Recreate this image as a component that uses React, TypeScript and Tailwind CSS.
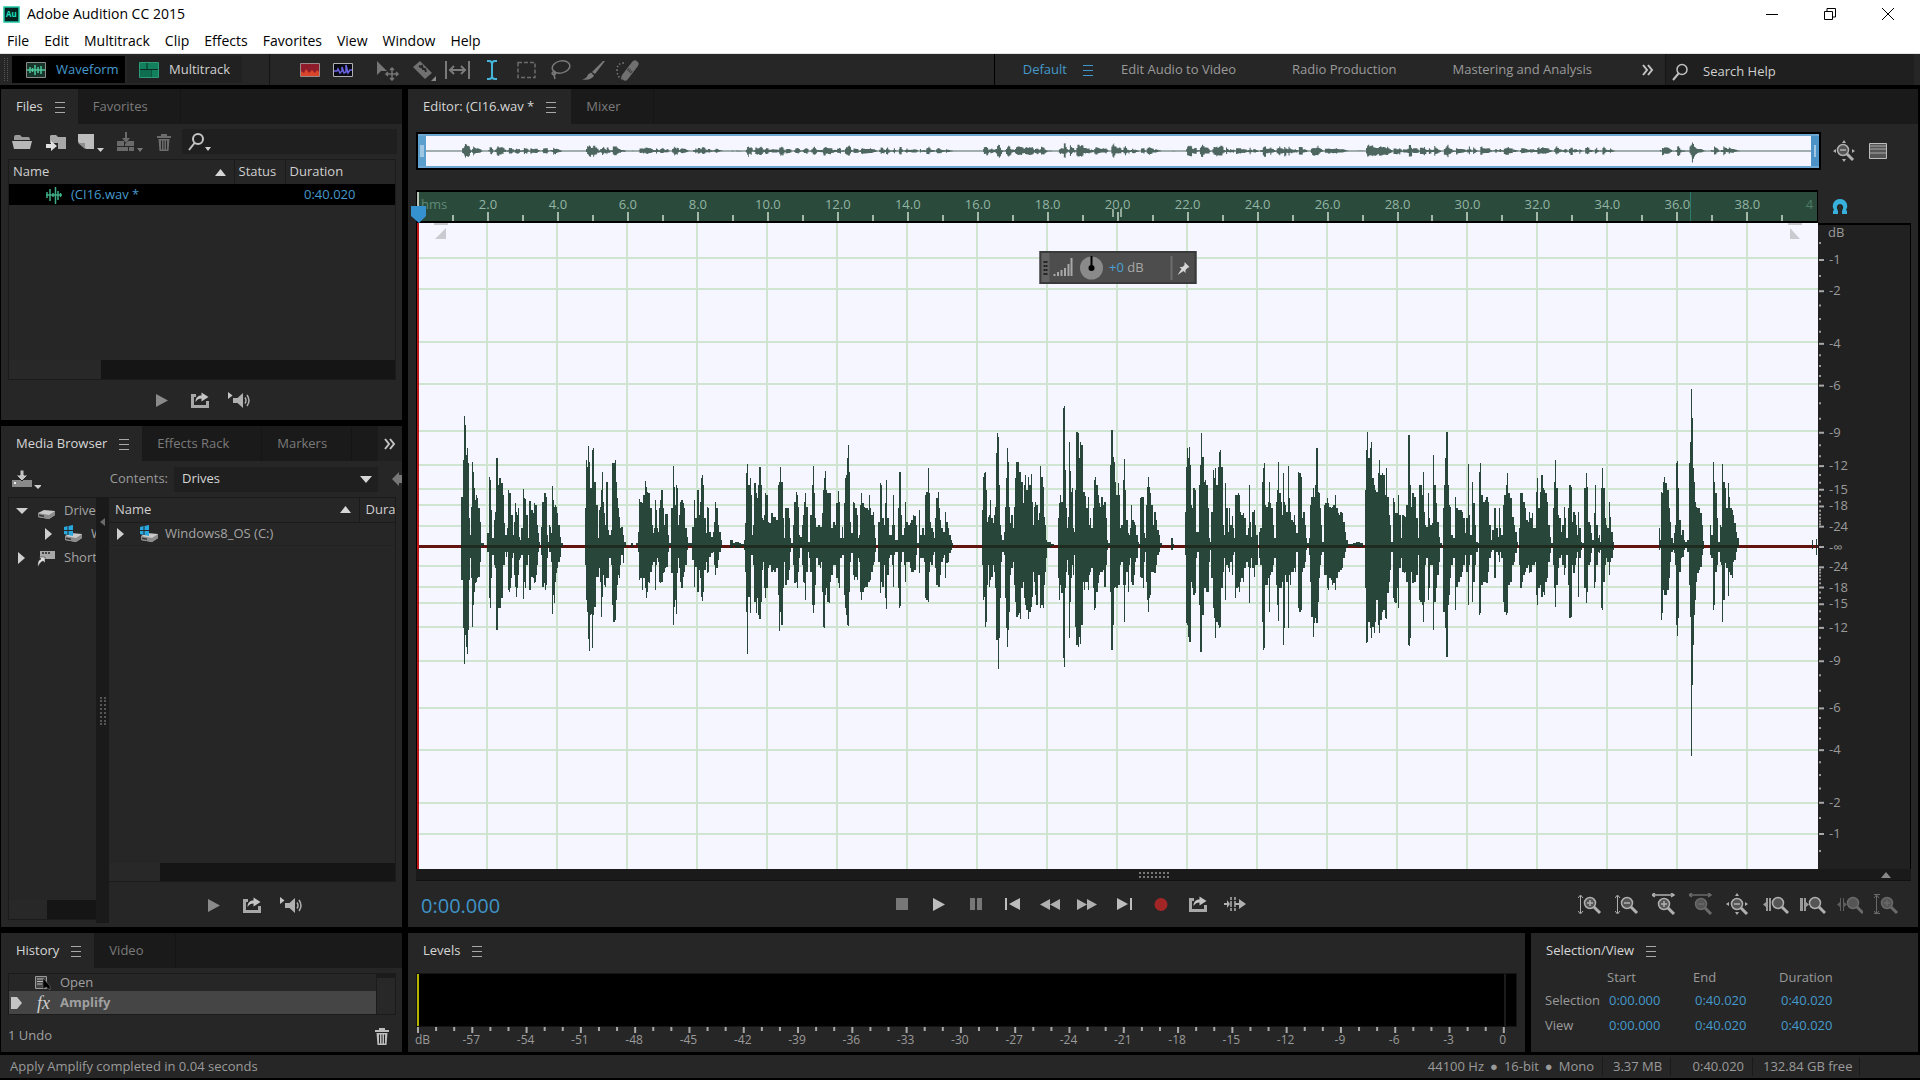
import type { ReactNode } from "react";
import clsx from "clsx";

// Peaks are "x,up,down" steps, each one held until the next x.
const TAKE_A =
  "143,145,105 147,180,165 149,255,250 151,388,358 154,360,270 157,270,305 160,290,328 162,245,255 165,80,105 168,30,40 171,115,100 174,248,247 176,220,180 178,170,140 181,135,115 185,150,110 188,140,100 191,110,95 195,70,50 198,20,20 200,6,4 207,0,0 216,35,20 220,200,25 222,203,160 225,195,188 227,105,100 230,20,30 235,75,60 238,100,70 240,180,200 242,260,255 245,205,278 247,180,188 250,200,188 254,200,130 256,185,160 259,150,60 262,65,30 263,65,60 266,30,20 269,30,35 272,50,20 274,165,135 278,155,140 281,157,130 283,90,100 286,90,40 288,30,25 290,70,90 294,125,125 297,100,155 299,90,130 302,110,90 305,25,45 308,15,40 312,50,30 316,168,163 319,140,110 322,138,130 326,90,60 329,20,30 334,132,135 339,105,95 343,95,100 346,125,115 350,120,110 353,120,90 355,60,60 358,35,20 361,10,5 365,0,0 367,55,30 370,130,125 374,155,115 377,155,135 380,145,120 383,30,40 386,10,5 390,60,20 393,55,20 395,35,50 398,178,208 400,135,150 403,115,175 406,120,110 409,115,85 412,95,70 415,60,50 419,25,35 422,5,5 428,0,0 490,110,60 493,255,165 496,235,200 498,298,282 501,250,318 504,170,210 507,172,208 510,285,310 513,292,210 516,190,185 520,190,165 521,120,95 525,20,97 528,25,50 530,105,70 533,115,110 535,165,215 538,220,155 541,130,90 543,95,120 546,60,125 548,188,178 550,190,100 553,100,90 555,45,100 558,30,40 562,45,60 565,245,180 567,248,210 569,245,230 573,255,225 576,190,165 579,140,120 582,110,90 585,85,100 588,50,60 591,55,30 595,55,35 597,30,55 600,8,6 605,0,0 620,7,7 623,0,0 632,5,0 638,40,20 640,138,105 645,130,100 650,125,135 653,150,100 657,192,130 660,175,158 663,160,140 666,155,110 670,155,115 673,110,80 677,60,60 680,35,50 684,50,50 686,135,135 689,105,60 691,50,40 695,40,50 698,110,110 701,135,115 704,165,110 707,110,85 710,40,50 712,60,80 715,93,70 718,92,65 721,30,20 724,5,3 731,110,85 735,175,150 737,238,240 739,175,185 743,120,165 745,180,208 747,170,85 750,60,40 753,90,70 756,130,110 760,134,128 763,125,95 767,110,80 771,50,60 775,25,15 779,5,3 790,55,45 794,60,50 796,135,125 799,80,65 803,165,140 808,165,110 810,90,75 813,130,100 815,200,155 818,210,168 821,180,140 824,80,75 828,35,50 831,115,85 835,110,80 838,40,35 843,25,25 847,40,20 850,70,60 853,128,90 857,110,70 861,60,45 865,40,20 870,15,10 873,0,0 897,15,10 904,5,4 910,8,8 920,6,8 927,3,2 936,15,15 938,65,80 941,215,200 944,243,328 946,180,155 951,200,205 954,150,30 957,30,30 961,60,60 964,185,170 968,155,205 971,140,160 974,180,210 978,235,222 982,180,170 985,80,75 988,75,50 991,90,130 994,155,160 998,150,130 1001,70,70 1004,65,60 1010,97,80 1016,85,75 1020,83,82 1025,75,70 1029,70,45 1031,180,150 1034,190,258 1037,235,200 1040,190,240 1043,80,130 1046,20,50 1049,80,140 1051,110,120 1056,110,105 1061,80,75 1065,20,20 1068,5,5 1073,60,60 1076,130,115 1080,158,110 1083,150,130 1086,115,80 1089,30,40 1092,25,10 1097,60,60 1100,90,110 1103,130,115 1107,155,165 1110,115,80 1113,10,20 1118,10,40 1121,90,80 1125,180,180 1128,238,205 1131,155,180 1134,80,120 1137,55,40 1141,60,60 1147,55,70 1150,55,50 1153,95,140 1155,165,245 1158,200,248 1161,222,150 1164,165,130 1168,155,170 1172,155,175 1176,155,110 1180,50,90 1185,70,60 1189,60,60 1193,125,100 1198,163,115 1201,130,130 1204,20,40 1209,55,30 1212,20,30 1215,125,150 1218,200,190 1221,210,210 1223,260,240 1226,300,242 1229,220,140 1232,70,50 1235,35,25 1239,130,90 1243,125,105 1247,110,95 1251,90,105 1253,20,40 1257,30,50 1260,120,140 1263,155,165 1266,125,140 1271,115,130 1275,110,125 1281,105,110 1285,150,110 1288,110,105 1292,90,80 1296,100,60 1299,60,50 1303,20,20 1306,0,0 1311,70,50 1315,185,145 1318,180,110 1322,80,125 1326,60,60 1330,125,160 1333,195,192 1336,80,90 1340,30,40 1344,30,30 1349,60,60 1352,150,125 1355,60,30 1359,15,20 1366,110,130 1368,220,190 1371,218,182 1374,90,50 1377,30,20 1383,50,60 1387,130,110 1390,70,50 1395,60,50 1399,65,70 1403,75,80 1407,90,80 1411,88,75 1416,60,30 1420,5,5 1425,105,85 1428,30,40 1434,50,40 1438,30,50 1441,30,40 1443,150,160 1446,160,165 1449,232,172 1452,155,80 1455,70,50 1459,50,60 1463,40,30 1467,20,20 1470,80,70 1473,140,120 1477,158,125 1480,110,125 1483,75,90 1487,50,50 1491,40,40 1495,40,30 1498,100,100 1501,70,55 1505,50,50 1509,30,25 1514,15,15 1518,5,5 1520,0,0";

const TAKE_B =
  "62,105,60 64,205,165 67,215,155 71,220,247 73,165,230 76,70,120 79,85,60 82,90,125 85,135,105 88,80,95 91,65,60 95,90,80 98,115,130 101,275,285 104,335,285 106,325,372 109,180,280 112,60,160 115,30,50 118,15,20 123,40,30 126,115,160 129,200,250 132,292,305 135,250,255 138,115,200 141,65,90 144,90,70 147,50,50 151,115,120 154,200,170 158,250,215 162,248,210 165,220,205 168,220,222 171,190,130 175,125,110 179,180,160 182,210,180 186,165,195 190,205,222 194,180,200 198,213,185 201,130,155 204,60,80 207,115,110 211,130,150 214,120,180 217,75,90 221,95,90 224,238,188 227,205,180 231,175,190 234,85,120 237,60,80 240,15,40 243,8,10 255,3,3 262,0,0 274,80,100 277,125,165 280,150,120 283,130,145 288,410,340 290,418,365 293,225,130 296,110,80 299,50,45 302,85,90 305,308,278 308,222,170 311,160,100 314,170,60 317,50,90 320,40,30 323,165,245 326,340,300 329,335,306 332,260,275 336,310,298 340,300,240 343,160,110 347,160,135 350,148,110 354,110,110 357,145,135 360,60,90 364,80,80 367,50,70 371,30,40 373,110,130 376,195,195 379,203,190 382,180,140 385,150,115 389,125,90 392,115,80 396,145,80 400,120,75 404,130,125 408,80,60 411,15,15 415,5,5 421,240,140 424,345,315 427,405,375 429,265,240 432,250,130 435,190,125 438,150,130 442,185,120 446,150,120 449,50,60 452,60,50 455,195,120 459,258,230 462,165,120 465,75,80 469,35,140 472,30,60 475,50,40 479,120,110 482,75,120 486,70,90 490,60,50 493,30,40 497,10,10 500,3,3 504,140,95 508,145,100 511,145,130 514,35,50 517,20,20 520,120,110 523,175,165 526,205,200 529,175,160 532,155,150 536,120,80 540,60,80 544,100,85 548,75,60 552,45,30 556,30,20 561,5,5 566,0,0 592,20,16 595,0,0 597,4,8 600,0,0 630,100,30 633,235,235 636,290,240 639,260,275 642,293,292 645,240,290 647,120,110 650,110,130 653,170,150 657,165,145 660,40,40 664,40,20 669,180,180 672,240,320 675,335,322 678,265,210 682,190,130 685,195,130 689,180,140 693,110,140 696,20,50 699,10,15 704,100,100 707,225,190 711,200,220 715,230,280 718,180,230 722,235,240 726,280,248 729,285,245 732,235,130 735,60,80 739,30,40 742,185,165 745,110,60 749,40,70 754,110,80 757,60,50 761,88,90 764,50,30 768,20,20 770,150,160 774,150,130 778,155,125 782,150,140 784,100,110 788,90,100 792,95,110 796,80,70 800,30,50 805,50,65 808,180,175 811,70,70 815,25,40 818,100,70 822,105,95 825,60,60 829,30,60 833,0,0 837,40,40 841,50,60 845,190,230 848,232,315 851,245,310 854,120,120 858,115,120 861,130,100 866,188,200 869,125,90 872,110,80 876,60,60 880,20,40 884,130,120 888,165,180 891,250,228 894,155,130 898,130,130 901,90,110 905,215,300 908,130,250 911,120,90 914,100,110 917,238,248 920,140,90 924,100,120 928,75,80 931,70,80 935,90,70 938,60,80 942,35,20 946,220,190 950,215,200 954,205,195 957,80,80 961,100,70 965,60,50 969,20,15 972,5,5 978,20,30 980,120,110 983,145,215 987,170,275 990,145,235 994,180,220 998,290,235 1001,160,170 1004,155,100 1007,110,60 1011,60,30 1014,10,20 1019,120,90 1023,125,90 1027,140,130 1030,125,135 1034,115,100 1038,110,105 1041,115,120 1045,120,115 1050,150,135 1053,110,100 1057,95,80 1061,90,80 1065,100,75 1069,95,70 1073,70,40 1077,40,20 1081,15,10 1085,3,3 1100,6,4 1110,10,6 1120,7,5 1127,0,0 1134,165,130 1137,285,295 1140,340,292 1143,260,230 1147,290,250 1150,280,250 1152,310,280 1154,200,245 1158,180,265 1162,165,230 1166,160,165 1170,215,240 1174,255,265 1177,210,225 1181,215,200 1185,210,195 1189,150,220 1193,230,222 1196,145,145 1200,90,110 1204,60,75 1208,10,20 1211,140,160 1215,130,170 1219,95,175 1223,95,130 1227,150,190 1230,90,70 1234,20,40 1238,90,80 1242,88,85 1246,85,80 1250,120,110 1254,330,300 1257,330,302 1260,180,280 1263,115,80 1266,155,115 1270,145,110 1274,145,110 1278,80,90 1282,20,30 1285,180,165 1289,180,170 1293,150,180 1296,218,230 1299,100,170 1303,60,60 1306,55,40 1310,155,165 1313,80,130 1317,60,60 1321,65,60 1325,270,255 1328,180,170 1332,125,130 1336,70,90 1340,25,50 1344,5,10 1349,0,0 1352,110,200 1356,180,200 1359,260,250 1362,340,335 1365,180,180 1368,120,150 1372,115,100 1376,30,60 1380,20,40 1386,145,195 1390,110,125 1395,105,110 1400,105,95 1405,100,80 1409,80,60 1413,35,30 1417,80,80 1422,242,180 1425,90,60 1429,30,30 1434,188,170 1437,125,110 1441,60,60 1445,10,20 1450,5,10 1454,220,210 1457,245,205 1460,150,120 1465,130,110 1470,135,110 1474,145,115 1478,130,80 1482,60,40 1486,15,20 1490,45,15 1496,110,100 1500,50,20 1505,25,30 1508,110,50 1512,50,20 1516,30,40 1520,120,170 1524,150,200 1528,180,210 1531,215,205 1534,155,120 1539,140,110 1545,0,0";

const TAKE_C =
  "383,85,60 388,60,50 392,40,25 397,10,5 401,0,0 404,50,60 407,155,128 411,155,110 416,130,90 420,110,80 425,75,70 429,70,60 433,100,85 437,80,80 441,95,60 445,50,60 450,50,50 454,160,150 457,200,180 460,110,130 464,160,120 468,210,155 472,170,140 476,165,150 480,155,110 485,130,100 489,60,50 494,25,25 498,5,5 503,110,60 506,190,130 509,255,185 512,170,120 517,90,70 521,80,40 525,40,30 529,60,60 533,115,90 537,80,70 541,20,30 546,110,120 550,180,218 554,175,215 557,70,60 561,100,85 565,90,60 569,60,40 573,30,20 576,100,155 579,50,40 583,10,15 588,5,5 593,170,130 598,215,175 601,175,140 605,70,60 609,60,50 613,35,25 617,15,10 621,95,130 625,180,110 628,60,60 632,20,20 636,30,25 640,10,15 643,170,190 646,230,195 649,170,110 652,80,60 656,60,40 660,50,50 665,130,90 668,85,50 672,40,40 676,10,15 680,0,0 810,50,15 813,15,10 816,160,225 819,155,205 822,190,135 826,205,150 829,185,150 834,165,135 838,110,100 841,70,50 845,20,20 850,5,15 855,35,25 858,60,60 860,245,240 863,253,272 866,170,220 869,75,80 873,30,40 878,45,35 882,15,15 886,10,10 892,15,20 896,245,120 899,310,215 902,355,345 903,468,633 906,380,420 909,230,300 912,190,210 915,130,165 918,115,110 922,110,85 926,110,75 930,95,65 934,60,30 938,12,12 942,0,0 958,60,30 962,30,40 967,250,195 970,190,180 974,155,80 978,80,60 982,10,20 987,60,50 991,55,60 994,243,230 997,190,165 1001,170,55 1005,110,70 1010,185,152 1013,145,80 1017,110,90 1021,105,100 1025,90,50 1029,65,45 1033,40,20 1037,20,10 1042,0,0 1255,15,12 1257,0,0 1266,18,30 1269,0,0";

const toPath = (take: string) => {
  const steps = take.split(" ").map((s) => s.split(",").map(Number));
  let top = `M${steps[0][0]} 0`;
  let bottom = "";
  steps.forEach(([x, up, down], i) => {
    const end = steps[i + 1] ? steps[i + 1][0] : x;
    top += `V${-up}H${end}`;
    bottom = `V${down}H${x}` + bottom;
  });
  return `${top}${bottom}Z`;
};

const TAKES = [
  { d: toPath(TAKE_A), transform: "translate(-7 0) scale(.357143 .333333)" },
  { d: toPath(TAKE_B), transform: "translate(543 0) scale(.357143 .333333)" },
  { d: toPath(TAKE_C), transform: "translate(963 0) scale(.344352 .333333)" },
];

const LENGTH = 40.02;
const DB_LINES = [-1, -2, -4, -6, -9, -12, -15, -18, -24];
const DB_MINOR = [-0.5, -1.5, -2.5, -3, -3.5, -4.5, -5, -5.5, -7, -8, -10, -11, -13, -14, -16, -17, -19, -20, -21, -22, -23];

const timeX = (s: number) => `${(s / LENGTH) * 100}%`;
const dbY = (db: number, side: number) => `${50 - side * 50 * Math.pow(10, db / 20)}%`;

const Hamburger = ({ blue }: { blue?: boolean }) => (
  <svg width="10" height="12" viewBox="0 0 10 12" shapeRendering="crispEdges">
    <path d="M0 1.500h10M0 6.500h10M0 11.500h10" stroke={blue ? "#3f97cb" : "#a8a8a8"} strokeWidth="1" />
  </svg>
);

const Tab = ({ label, active, className }: { label: string; active?: boolean; className?: string }) => (
  <button
    className={clsx(
      "flex h-full items-center gap-3 whitespace-nowrap border-r pl-[15px] text-[13px]",
      active ? "border-transparent bg-[#262626] text-[#d6d6d6]" : "border-[#151515] text-[#7b7b7b]",
      className
    )}
  >
    {label}
    {active && <Hamburger />}
  </button>
);

const TabBar = ({ children, plain }: { children: ReactNode; plain?: boolean }) => (
  <div className={clsx("flex h-[35px] shrink-0", plain ? "bg-[#262626]" : "bg-[#1a1a1a]")}>{children}</div>
);

const Icon = ({ w, h = 22, children }: { w: number; h?: number; children: ReactNode }) => (
  <svg width={w} height={h} viewBox={`0 0 ${w} ${h}`} fill="none" className="shrink-0">
    {children}
  </svg>
);

const IconButton = ({ label, className, children }: { label: string; className?: string; children: ReactNode }) => (
  <button aria-label={label} className={clsx("flex shrink-0 items-center justify-center", className)}>
    {children}
  </button>
);

const LoopIcon = () => (
  <Icon w={20}>
    <path d="M1 5h5v3H4v8h12v-4h3v7H1z" fill="#a8a8a8" />
    <path d="M5.500 13c0-5 3-6.500 6-6.500V3.500l7 4.500-7 4.500V9.500c-2.500 0-4.500 1-6 3.500z" fill="#c4c4c4" />
  </Icon>
);

const PlayIcon = ({ color }: { color: string }) => (
  <Icon w={14}>
    <path d="M1 5v13l12-6.500z" fill={color} />
  </Icon>
);

const SpeakerIcon = () => (
  <Icon w={24}>
    <path d="M1 3l4.500 3.500L1 10z" fill="#c4c4c4" />
    <path d="M6 9h4.500L16 4v15l-5.500-5H6z" fill="#b0b0b0" />
    <path d="M18 8.500q2 3 0 6M20 6q4 5.500 0 11" stroke="#b0b0b0" strokeWidth="1.500" />
  </Icon>
);

const TrashIcon = ({ color }: { color: string }) => (
  <Icon w={16}>
    <path d="M2.500 8h11l-1 12h-9zM1 5h14v2H1zM5 3h6v2H5z" fill={color} />
    <path d="M5.500 9.500v9M8 9.500v9M10.500 9.500v9" stroke="#262626" />
  </Icon>
);

const ClipIcon = () => (
  <Icon w={18}>
    <path d="M1 11h16M2 8v6M5 5v12M8 9v4M10.500 3v17M13 7v9M15.500 9v4" stroke="#3fae86" strokeWidth="1.500" />
  </Icon>
);

const DriveIcon = ({ windows }: { windows?: boolean }) => (
  <Icon w={20}>
    <path d="M2 13l6-3 11 1v4l-6 4-11-2z" fill="#c9c9c9" />
    <path d="M2 13l11 2 6-4v4l-6 4-11-2z" fill="#8b8b8b" />
    <path d="M3 14.500l5 1v1.500l-5-1z" fill="#333" />
    {windows && (
      <>
        <path d="M0 2h10v10H0z" fill="#262626" />
        <path d="M1 4l3.500-1v4H1zM5.500 3L10 2v5H5.500zM1 8h3.500v4L1 11zM5.500 8H10v5l-4.500-1z" fill="#29a8e0" />
      </>
    )}
  </Icon>
);

const Lens = ({ sign, x = 10, y = 12, color = "#b0b0b0" }: { sign?: string; x?: number; y?: number; color?: string }) => (
  <g>
    <circle cx={x} cy={y - 2} r="5.500" fill="#555" stroke={color} strokeWidth="1.500" />
    <path d={`M${x + 4} ${y + 2}l6 6`} stroke={color} strokeWidth="3" />
    {sign && <path d={`M${x - 3} ${y - 2}h6`} stroke={color} strokeWidth="1.500" />}
    {sign === "+" && <path d={`M${x} ${y - 5}v6`} stroke={color} strokeWidth="1.500" />}
  </g>
);

const UpDown = ({ color = "#b0b0b0" }) => (
  <path d="M2.500 3v17M0 5l2.500-3L5 5M0 18l2.500 3L5 18" stroke={color} />
);

const LeftRight = ({ color = "#b0b0b0" }) => (
  <path d="M1 2h20M3 0L0 2l3 2M19 0l3 2-3 2" stroke={color} strokeWidth="1.500" />
);

const Arrows = () => (
  <path d="M11 0l2 3H9zM11 22l2-3H9zM0 11l3-2v4zM22 11l-3-2v4z" fill="#b0b0b0" />
);

const ZOOMS: { label: string; icon: ReactNode }[] = [
  { label: "Zoom In (Amplitude)", icon: <><UpDown /><Lens sign="+" x={12} /></> },
  { label: "Zoom Out (Amplitude)", icon: <><UpDown /><Lens sign="-" x={12} /></> },
  { label: "Zoom In (Time)", icon: <><LeftRight /><Lens sign="+" x={12} y={13} /></> },
  { label: "Zoom Out (Time)", icon: <><LeftRight color="#6a6a6a" /><Lens sign="-" x={12} y={13} color="#6a6a6a" /></> },
  { label: "Zoom Out Full", icon: <><Arrows /><Lens sign="-" x={11} y={13} /></> },
  { label: "Zoom In at In Point", icon: <><path d="M5 5H3v4l-3 2.500L3 14v4h2zM6 5h2v13H6z" fill="#9a9a9a" /><Lens x={15} /></> },
  { label: "Zoom In at Out Point", icon: <><path d="M0 5h3v13H0zM4 5h2v4l3 2.500L6 14v4H4z" fill="#9a9a9a" /><Lens x={15} /></> },
  { label: "Zoom to Selection", icon: <><path d="M4 5v13H3v-4l-3-2.500L3 9V5zM6 5v13h1v-4l3-2.500L7 9V5z" fill="#5e5e5e" /><Lens x={16} color="#6a6a6a" /></> },
  { label: "Zoom Reset", icon: <><path d="M0 1.500h6M0 20.500h6" stroke="#6a6a6a" /><UpDown color="#6a6a6a" /><Lens sign="+" x={13} color="#6a6a6a" /></> },
];

const TRANSPORT: { label: string; icon: ReactNode }[] = [
  { label: "Stop", icon: <path d="M5 5h12v12H5z" fill="#777" /> },
  { label: "Play", icon: <path d="M5 5v13l12-6.500z" fill="#bdbdbd" /> },
  { label: "Pause", icon: <path d="M5 5h5v12H5zM12 5h5v12h-5z" fill="#777" /> },
  { label: "Previous", icon: <path d="M3 5h2v12H3zM18 5v12L7 11z" fill="#bdbdbd" /> },
  { label: "Rewind", icon: <path d="M11 6v11L1 11.500zM21 6v11l-10-5.500z" fill="#b0b0b0" /> },
  { label: "Fast Forward", icon: <path d="M1 6v11l10-5.500zM11 6v11l10-5.500z" fill="#b0b0b0" /> },
  { label: "Next", icon: <path d="M4 5v12l11-6zM17 5h2v12h-2z" fill="#bdbdbd" /> },
  { label: "Record", icon: <circle cx="11" cy="11.500" r="6.500" fill="#a32626" /> },
];

const TitleBar = () => (
  <header className="h-[54px] shrink-0 border-b border-[#e4e4e4] bg-white text-sm text-black">
    <div className="flex h-7 items-center">
      <svg width="17" height="17" viewBox="0 0 17 17" className="mr-[7px] ml-[3px]">
        <rect x="1" y="1" width="15" height="15" fill="#04221f" stroke="#1fc9a6" strokeWidth="1.500" />
        <text x="3" y="11" fontSize="8" fontWeight="700" fill="#19e0c0">Au</text>
      </svg>
      <span>Adobe Audition CC 2015</span>
      <div className="ml-auto flex gap-9 pr-[21px]">
        <IconButton label="Minimize" className="w-[22px]"><Icon w={12} h={12}><path d="M0 6.500h12" stroke="#000" /></Icon></IconButton>
        <IconButton label="Restore" className="w-[22px]">
          <Icon w={12} h={12}><path d="M.5 3.500h8v8h-8zM3 3V.5h8.500V9H9" stroke="#000" /></Icon>
        </IconButton>
        <IconButton label="Close" className="w-[22px]"><Icon w={12} h={12}><path d="M0 0l12 12M12 0L0 12" stroke="#000" /></Icon></IconButton>
      </div>
    </div>
    <nav className="flex h-[26px] items-center gap-[15px] pl-[7px]">
      {["File", "Edit", "Multitrack", "Clip", "Effects", "Favorites", "View", "Window", "Help"].map((m) => (
        <button key={m}>{m}</button>
      ))}
    </nav>
  </header>
);

const TOOLS: { label: string; icon: ReactNode }[] = [
  { label: "Move", icon: <><path d="M1 2v14l4-4h6z" fill="#767676" /><path d="M16 9v12M10 15h12M14 11l2-2 2 2M14 19l2 2 2-2M12 13l-2 2 2 2M20 13l2 2-2 2" stroke="#767676" strokeWidth="1.500" /></> },
  { label: "Razor", icon: <><path d="M10 2l12 12-7 6L3 8z" fill="#707070" /><path d="M9 7l2 1 1-1 1 3 2 0 1 3" stroke="#262626" strokeWidth="2" /><path d="M26 17v5h-5z" fill="#8a8a8a" /></> },
  { label: "Slip", icon: <><path d="M2 2v18M25 2v18" stroke="#7a7a7a" strokeWidth="2" /><path d="M5 11h17M10 7l-4 4 4 4M17 7l4 4-4 4" stroke="#7a7a7a" strokeWidth="2" /></> },
  { label: "Time Selection", icon: <path d="M9 2h2q3 0 3 3v12q0 3-3 3H9M19 2h-2q-3 0-3 3v12q0 3 3 3h2" stroke="#45b4d8" strokeWidth="2" /> },
  { label: "Marquee Selection", icon: <path d="M6 3.500h17v15H6z" stroke="#6c6c6c" strokeWidth="1.500" strokeDasharray="4 2" /> },
  { label: "Lasso Selection", icon: <><ellipse cx="15" cy="8" rx="9" ry="6" transform="rotate(-12 15 8)" stroke="#7a7a7a" strokeWidth="1.500" /><path d="M8 12q-4 3 0 4 3-1 0-4 0 5 1 8" stroke="#7a7a7a" strokeWidth="1.500" /></> },
  { label: "Paintbrush", icon: <path d="M25 2L15 15l-3-2L23 2zM11 13.500l3 3q-2 5-12 4 5-1 6-5z" fill="#7a7a7a" /> },
  { label: "Spot Healing", icon: <><path d="M11 18L21 5" stroke="#707070" strokeWidth="7" strokeLinecap="round" /><path d="M10 4q-7 0-7 7t5 9" stroke="#7a7a7a" strokeDasharray="1.500 2" strokeWidth="1.500" /><path d="M14 10l4 4" stroke="#333" strokeWidth="3" strokeDasharray="1 1" /></> },
];

const Toolbar = () => (
  <div className="flex h-[31px] shrink-0 items-stretch bg-[#262626] text-[13px] text-[#9a9a9a]">
    <div className="my-1 ml-1 w-1 border-x border-dotted border-[#555]" />
    <button className="my-0.5 ml-1 flex w-[113px] items-center gap-2.5 bg-black pl-3.5 text-[#4599cb]">
      <Icon w={20} h={16}>
        <path d="M.5.5h19v15H.5z" fill="#18352c" stroke="#8a8a8a" />
        <path d="M1 8h18M4 5v6M6.500 6v4M9 3v10M12 5v6M15 4v8" stroke="#4ec79a" strokeWidth="1.500" />
      </Icon>
      Waveform
    </button>
    <button className="my-0.5 ml-0.5 flex w-[115px] items-center gap-2.5 bg-[#212121] pl-3 text-[#d0d0d0]">
      <Icon w={20} h={16}>
        <path d="M.5.5h19v15H.5z" fill="#12805c" stroke="#2c9a74" />
        <path d="M8 1v6M1 7.500h18M12 8v7" stroke="#0b2a20" />
        <path d="M1 8h11v7H1z" fill="#0f6e4f" />
      </Icon>
      Multitrack
    </button>
    <div className="ml-[27px] w-px bg-[#141414]" />
    <div className="ml-[30px] flex items-center gap-[13px]">
      <IconButton label="Spectral Frequency">
        <Icon w={20} h={14}>
          <path d="M.5.5h19v13H.5z" fill="#8e1c2a" stroke="#9a8a8a" />
          <path d="M1 13V8l3 2 2-4 3 4 3-3 3 3 2-3 2 2v4z" fill="#d8452a" />
        </Icon>
      </IconButton>
      <IconButton label="Spectral Pitch">
        <Icon w={20} h={14}>
          <path d="M.5.5h19v13H.5z" fill="#0a0a14" stroke="#b0b0b0" />
          <path d="M1 8h3l1-2 2 4 2-2V4l2 6 2-1V2l2 8 2-3h2" stroke="#6a63e0" strokeWidth="1.500" />
        </Icon>
      </IconButton>
    </div>
    <div className="flex items-center pl-5">
      {TOOLS.map((t) => (
        <IconButton key={t.label} label={t.label} className="w-[34px]"><Icon w={28}>{t.icon}</Icon></IconButton>
      ))}
    </div>
    <div className="ml-auto w-px bg-black" />
    <nav className="flex items-center pl-7">
      <button className="mr-4 text-[#4599cb]">Default</button>
      <Hamburger blue />
      <button className="ml-7">Edit Audio to Video</button>
      <button className="ml-14">Radio Production</button>
      <button className="ml-14">Mastering and Analysis</button>
      <IconButton label="More workspaces" className="mr-2.5 ml-[49px]"><Icon w={14} h={14}><path d="M2 2l4 5-4 5M7 2l4 5-4 5" stroke="#c4c4c4" strokeWidth="2" /></Icon></IconButton>
    </nav>
    <label className="mr-1.5 flex w-[249px] items-center gap-[15px] border-l border-[#151515] bg-[#1f1f1f] pt-1 pl-1.5">
      <Icon w={16} h={18}><circle cx="10" cy="6.500" r="5" stroke="#c0c0c0" strokeWidth="1.500" /><path d="M6.500 10.500L1 17" stroke="#c0c0c0" strokeWidth="2" /></Icon>
      <input aria-label="Search Help" placeholder="Search Help" className="w-full bg-transparent outline-none placeholder:text-[#cfcfcf]" />
    </label>
  </div>
);

const Preview = ({ className }: { className?: string }) => (
  <div className={clsx("flex items-center gap-[21px]", className)}>
    <IconButton label="Play"><PlayIcon color="#8a8a8a" /></IconButton>
    <IconButton label="Loop Playback"><LoopIcon /></IconButton>
    <IconButton label="Auto-Play" className="-ml-1"><SpeakerIcon /></IconButton>
  </div>
);

const FilesPanel = () => (
  <section className="flex h-[331px] shrink-0 flex-col bg-[#262626]">
    <TabBar>
      <Tab label="Files" active className="pr-3" />
      <Tab label="Favorites" className="pr-8" />
    </TabBar>
    <div className="flex h-[35px] items-center pl-[11px]">
      <IconButton label="Open File"><Icon w={20}><path d="M2 6q0-2 2-2h4l2 2h6q2 0 2 3H2z" fill="#9a9a9a" /><path d="M0 10h20l-2 8H2z" fill="#b8b8b8" /></Icon></IconButton>
      <IconButton label="Import File" className="ml-3.5"><Icon w={22}><path d="M4 5q0-1 2-1h4l2 2h8v12h-8v-6H4z" fill="#a8a8a8" /><path d="M0 13h5v-3l6 5-6 5v-3H0z" fill="#e0e0e0" /></Icon></IconButton>
      <IconButton label="New File" className="ml-2.5"><Icon w={26}><path d="M0 3h16v15H8l-8-7z" fill="#bdbdbd" /><path d="M0 12h7v6z" fill="#8e8e8e" /><path d="M19 17h7l-3.500 4z" fill="#d0d0d0" /></Icon></IconButton>
      <IconButton label="Insert into Multitrack" className="ml-3"><Icon w={28}><path d="M1 10h7v5H1zM1 16h11v4H1zM13 16h5v4h-5zM12 10h6v5H9v-2z" fill="#6a6a6a" /><path d="M9 1h2v6h3l-4 5-4-5h3z" fill="#6a6a6a" /><path d="M21 17h6l-3 4z" fill="#777" /></Icon></IconButton>
      <IconButton label="Delete" className="ml-3"><TrashIcon color="#6c6c6c" /></IconButton>
      <label className="mr-[5px] ml-2.5 flex h-[25px] flex-1 items-center gap-1 bg-[#1f1f1f] pl-1.5">
        <Icon w={24}><circle cx="10" cy="8" r="5" stroke="#c4c4c4" strokeWidth="2" /><path d="M6.500 12L1 19" stroke="#c4c4c4" strokeWidth="2" /><path d="M17 16h6l-3 4z" fill="#d0d0d0" /></Icon>
        <input aria-label="Filter files" className="w-full bg-transparent outline-none" />
      </label>
    </div>
    <div className="mr-1.5 ml-[7px] flex flex-1 flex-col border border-[#1b1b1b]">
      <table className="w-full table-fixed border-collapse text-left text-[13px]">
        <thead>
          <tr className="h-6 text-[#cfcfcf]">
            <th className="w-[225px] border-r border-[#1b1b1b] pl-1 font-normal">
              <span className="flex items-center justify-between pr-2">
                Name
                <Icon w={11} h={7}><path d="M5.500 0L11 7H0z" fill="#d6d6d6" /></Icon>
              </span>
            </th>
            <th className="w-[51px] border-r border-[#1b1b1b] pl-1 font-normal">Status</th>
            <th className="pl-1 font-normal">Duration</th>
          </tr>
        </thead>
        <tbody>
          <tr className="h-[21px] bg-black text-[#4599cb]">
            <td className="pl-9">
              <span className="flex h-[21px] items-center gap-2"><ClipIcon />(CI16.wav *</span>
            </td>
            <td />
            <td className="pl-[19px]">0:40.020</td>
          </tr>
        </tbody>
      </table>
      <div className="mt-auto h-[19px] bg-[#151515]"><div className="h-full w-[92px] bg-[#282828]" /></div>
    </div>
    <Preview className="h-10 justify-center pl-0.5" />
  </section>
);

const Twirl = ({ open }: { open?: boolean }) => (
  <Icon w={12} h={12}><path d={open ? "M0 3h12L6 9z" : "M2 0v12l7-6z"} fill="#cfcfcf" /></Icon>
);

const MediaBrowser = () => (
  <section className="flex min-h-0 flex-1 flex-col bg-[#262626]">
    <TabBar>
      <Tab label="Media Browser" active className="pr-3" />
      <Tab label="Effects Rack" className="pr-8" />
      <Tab label="Markers" className="pr-6" />
      <IconButton label="More panels" className="ml-auto w-6 bg-[#202020]"><Icon w={14} h={14}><path d="M2 2l4 5-4 5M7 2l4 5-4 5" stroke="#c4c4c4" strokeWidth="2" /></Icon></IconButton>
    </TabBar>
    <div className="flex h-9 shrink-0 items-center pl-2.5 text-[13px]">
      <IconButton label="Import"><Icon w={30}><path d="M1 12h20v7H1z" fill="#8a8a8a" /><path d="M9 2h4v5h4l-6 6-6-6h4z" fill="#c4c4c4" stroke="#262626" /><path d="M23 17h8l-4 4z" fill="#d0d0d0" /><path d="M3 15h2" stroke="#eee" strokeWidth="2" /></Icon></IconButton>
      <label htmlFor="contents" className="ml-auto text-[#9a9a9a]">Contents:</label>
      <div className="ml-1.5 flex h-[25px] w-[204px] items-center bg-[#1f1f1f] pr-1.5">
        <select id="contents" className="w-full appearance-none bg-transparent pl-2 text-[#d6d6d6] outline-none">
          <option>Drives</option>
        </select>
        <Icon w={12} h={7}><path d="M0 0h12L6 7z" fill="#d6d6d6" /></Icon>
      </div>
      <IconButton label="Back" className="ml-3.5"><Icon w={10} h={14}><path d="M0 7l7-7v3h3v8H7v3z" fill="#777" /></Icon></IconButton>
    </div>
    <div className="flex min-h-0 flex-1 text-[13px] text-[#a4a4a4]">
      <div className="mb-[7px] ml-[7px] flex w-[88px] shrink-0 flex-col overflow-hidden border border-r-0 border-[#1b1b1b] whitespace-nowrap">
        <div className="flex h-[25px] items-center gap-2 pl-[7px]">
          <Twirl open /><DriveIcon /><span className="min-w-0 flex-1 overflow-hidden">Drives</span>
        </div>
        <div className="flex h-[22px] items-center gap-2 pl-[34px]">
          <Twirl /><DriveIcon windows /><span className="min-w-0 flex-1 overflow-hidden">W</span>
        </div>
        <div className="flex h-[25px] items-center gap-2 pl-[7px]">
          <Twirl />
          <Icon w={20}><path d="M4 4h15v8H8l-4-2z" fill="#a8a8a8" /><path d="M6 6h8" stroke="#444" strokeWidth="2" strokeDasharray="2 1" /><path d="M2 20q-1-7 3-8l-2-2h6v6l-2-2q-3 1-5 6z" fill="#dedede" stroke="#262626" strokeWidth=".5" /></Icon>
          <span className="min-w-0 flex-1 overflow-hidden">Shortcuts</span>
        </div>
        <div className="mt-auto h-[19px] shrink-0 bg-[#151515]"><div className="h-full w-[38px] bg-[#282828]" /></div>
      </div>
      <div className="mb-1 flex w-[13px] shrink-0 flex-col items-center bg-[#1a1a1a] pt-[21px]">
        <Icon w={5} h={8}><path d="M5 0v8L0 4z" fill="#6a6a6a" /></Icon>
        <div className="mt-auto h-7 w-1.5 border-x-2 border-dotted border-[#555]" />
        <div className="h-[198px]" />
      </div>
      <div className="mr-1.5 flex min-w-0 flex-1 flex-col">
        <div className="flex flex-1 flex-col border border-l-0 border-[#1b1b1b]">
          <table className="w-full table-fixed border-collapse text-left">
            <thead>
              <tr className="h-6 border-b border-[#1b1b1b] text-[#cfcfcf]">
                <th className="pl-1.5 font-normal">
                  <span className="flex items-center justify-between pr-2">
                    Name
                    <Icon w={11} h={7}><path d="M5.500 0L11 7H0z" fill="#d6d6d6" /></Icon>
                  </span>
                </th>
                <th className="w-9 overflow-hidden border-l border-[#1b1b1b] pl-1.5 font-normal">Duration</th>
              </tr>
            </thead>
            <tbody>
              <tr className="h-[22px] border-b border-[#222]">
                <td colSpan={2} className="pl-1.5">
                  <span className="flex h-[22px] items-center gap-2"><Twirl /><span className="ml-1 flex items-center gap-1.5"><DriveIcon windows />Windows8_OS (C:)</span></span>
                </td>
              </tr>
            </tbody>
          </table>
          <div className="mt-auto h-[18px] bg-[#151515]"><div className="h-full w-[51px] bg-[#282828]" /></div>
        </div>
        <Preview className="h-[45px] shrink-0 pl-[98px]" />
      </div>
    </div>
  </section>
);

const HistoryPanel = () => (
  <section className="flex w-[401px] shrink-0 flex-col bg-[#262626] text-[13px] text-[#a0a0a0]">
    <TabBar>
      <Tab label="History" active className="pr-3" />
      <Tab label="Video" className="pr-8" />
    </TabBar>
    <div className="mt-[5px] mr-1.5 ml-[7px] flex h-[42px] border border-[#1b1b1b]">
      <ul className="flex-1">
        <li className="flex h-[17px] items-center gap-2 pl-[26px]">
          <Icon w={17} h={16}><path d="M.5 1.500h11v12H.5z" fill="#444" stroke="#999" /><path d="M2 4h7M2 6.500h7M2 9h5" stroke="#bbb" /><path d="M8 3v11l3-2 4 3v-4z" fill="#000" stroke="#888" strokeWidth=".5" /></Icon>
          Open
        </li>
        <li className="flex h-[23px] items-center bg-[#454545] font-bold">
          <Icon w={14} h={14}><path d="M2 1h6l5 6-5 6H2z" fill="#c4c4c4" /></Icon>
          <i className="ml-3.5 w-[23px] font-['Liberation_Serif'] text-lg font-normal text-[#d0d0d0]">fx</i>
          Amplify
        </li>
      </ul>
      <div className="w-[19px] border-l border-[#1b1b1b] bg-[#1b1b1b] pt-1"><div className="h-full bg-[#282828]" /></div>
    </div>
    <div className="flex flex-1 items-center justify-between pt-1 pr-3 pl-[7px]">
      1 Undo
      <IconButton label="Delete history"><TrashIcon color="#bdbdbd" /></IconButton>
    </div>
  </section>
);

const Wave = ({ color, y }: { color: string; y: number }) => (
  <g fill={color} transform={`translate(0 ${y})`}>
    {TAKES.map((t) => (
      <path key={t.transform} d={t.d} transform={t.transform} />
    ))}
  </g>
);

const Overview = () => (
  <div className="flex h-[38px] flex-1 border-2 border-black bg-[#f5f6ff]">
    <div className="flex w-full border-y-2 border-[#6da7cf]">
      <button aria-label="View start" className="flex w-2 items-center justify-center bg-[#5b9fcd]"><span className="h-3 w-1 bg-[#9fc6e2]" /></button>
      <svg className="h-full min-w-0 flex-1" viewBox="8 0 1385 30" preserveAspectRatio="none">
        <path d="M0 15h1401" stroke="#4e6660" />
        <g transform="translate(0 15) scale(1 .055)"><Wave color="#4e6660" y={0} /></g>
      </svg>
      <button aria-label="View end" className="flex w-2 items-center justify-center bg-[#4b93c6]"><span className="h-3 w-0.5 bg-[#9fc6e2]" /></button>
    </div>
  </div>
);

const Ruler = () => (
  <div className="relative h-[33px] flex-1 border-x border-y-2 border-black bg-[#2a4a3c]">
    <svg width="100%" height="29" className="block text-[13px]" shapeRendering="crispEdges">
      <text x="4" y="17" fill="#5f8a75">hms</text>
      {Array.from({ length: 39 }, (_, i) => i + 1).map((s) => (
        <rect key={s} x={timeX(s)} y={s % 2 ? 23 : 20} width="2" height="9" fill="#a3b8a8" />
      ))}
      {Array.from({ length: 19 }, (_, i) => (i + 1) * 2).map((s) => (
        <text key={s} x={timeX(s)} y="17" dx="1" textAnchor="middle" fill="#93b5a3">{s.toFixed(1)}</text>
      ))}
      <text x="99.200%" y="17" fill="#4f7a66">4</text>
      <path d="M0 0v29" stroke="#b8c4b8" strokeWidth="3" />
      <rect x={timeX(36.4)} y="0" width="1" height="29" fill="#2f7a70" />
    </svg>
    <svg className="absolute -bottom-0.5 -left-1.5" width="15" height="17" viewBox="0 0 15 17">
      <path d="M0 0h15v10l-7 7-8-7z" fill="#3592cf" />
    </svg>
    <div className="absolute bottom-1 left-1/2 h-2 w-2.5 -translate-x-1/2 border-x-2 border-[#8fa898]" />
  </div>
);

const WaveformView = () => (
  <div className="relative min-w-0 flex-1 border-l border-black bg-[#f5f6ff]">
    <svg className="absolute inset-0 h-full w-full" shapeRendering="crispEdges">
      {Array.from({ length: 19 }, (_, i) => (i + 1) * 2).map((s) => (
        <line key={s} x1={timeX(s)} x2={timeX(s)} y1="0" y2="100%" stroke="#cfe5d2" strokeWidth="2" />
      ))}
      {[1, -1].map((side) =>
        DB_LINES.map((db) => (
          <line key={side * db} x1="0" x2="100%" y1={dbY(db, side)} y2={dbY(db, side)} stroke="#cfe5d2" strokeWidth="2" />
        ))
      )}
      <line x1="0" x2="100%" y1="50%" y2="50%" stroke="#a31c1c" strokeWidth="3" />
      <svg width="100%" height="100%" viewBox="0 0 1401 646" preserveAspectRatio="none">
        <Wave color="#28463a" y={322} />
      </svg>
      <line x1="0" x2="100%" y1="50%" y2="50%" stroke="#140a00" strokeOpacity=".45" strokeWidth="3" />
      <line x1="1" x2="1" y1="0" y2="100%" stroke="#c01818" strokeWidth="2" />
    </svg>
    <svg className="absolute top-0 left-[17px]" width="14" height="18" viewBox="0 0 14 18">
      <path d="M0 1h14" stroke="#999" /><path d="M12 5v11H1z" fill="#c9cbd0" />
    </svg>
    <svg className="absolute top-0 right-4" width="14" height="18" viewBox="0 0 14 18">
      <path d="M0 1h14" stroke="#999" /><path d="M2 5v11h10z" fill="#c9cbd0" />
    </svg>
    <div className="absolute top-7 left-1/2 flex h-[33px] w-[157px] -translate-x-1/2 items-center border-2 border-[#3a3a3a] bg-[#4d4d4d] text-[13px] text-[#a8a8a8]">
      <div className="flex h-full w-2 items-center justify-center bg-[#626262]"><div className="h-3.5 w-1 border-x-2 border-dotted border-[#222]" /></div>
      <Icon w={24}><path d="M4 19h2v-2H4zM7.500 19h2v-4h-2zM11 19h2v-6h-2zM14.500 19h2v-8h-2zM18 19h2V7h-2zM21 19h2V1h-2z" fill="#a8a8a8" /></Icon>
      <svg width="24" height="24" viewBox="0 0 24 24" className="ml-1.5">
        <circle cx="12" cy="12" r="11.500" fill="#8a8a8a" /><circle cx="12" cy="12" r="3" /><path d="M12 0v12" stroke="#000" strokeWidth="2" />
      </svg>
      <span className="ml-1.5"><span className="text-[#4ba0d4]">+0</span> dB</span>
      <div className="ml-auto h-6 w-0.5 bg-[#6e6e6e]" />
      <IconButton label="Pin" className="mx-1"><Icon w={14} h={14}><path d="M8 1l5 5-2 1-2 2v3l-2-2-6 4 4-6-2-2h3l2-2z" fill="#d6d6d6" /></Icon></IconButton>
    </div>
  </div>
);

const DecibelScale = () => (
  <svg className="h-full w-[93px] shrink-0 border-t-2 border-r border-black bg-[#212121] text-[13px]" fill="#9a9a9a">
    {[1, -1].map((side) => (
      <g key={side}>
        {DB_MINOR.map((db) => (
          <line key={db} x1="1" x2="3" y1={dbY(db, side)} y2={dbY(db, side)} stroke="#9a9a9a" strokeWidth="2" />
        ))}
        {DB_LINES.map((db) => (
          <g key={db}>
            <line x1="1" x2="6" y1={dbY(db, side)} y2={dbY(db, side)} stroke="#a8a8a8" strokeWidth="2" />
            <text x="11" y={dbY(db, side)} dy="4">{db}</text>
          </g>
        ))}
      </g>
    ))}
    <line x1="1" x2="6" y1="50%" y2="50%" stroke="#a8a8a8" strokeWidth="2" />
    <text x="11" y="50%" dy="5">-∞</text>
    <text x="10" y="12">dB</text>
  </svg>
);

const EditorPanel = () => (
  <section className="flex min-w-0 flex-1 flex-col bg-[#262626]">
    <TabBar>
      <Tab label="Editor: (CI16.wav *" active className="pr-3.5" />
      <Tab label="Mixer" className="pr-8" />
    </TabBar>
    <div className="mt-2 flex shrink-0 pl-2">
      <Overview />
      <div className="flex w-[100px] items-center gap-3.5 pl-3">
        <IconButton label="Zoom Out Full"><Icon w={22}><Arrows /><Lens sign="-" x={10} y={12} /></Icon></IconButton>
        <IconButton label="Toggle Overview"><Icon w={18} h={18}><path d="M.5 1.500h17v15H.5z" fill="#555" stroke="#bdbdbd" /><path d="M1 4h16M1 7h16M1 11h16" stroke="#aaa" /></Icon></IconButton>
      </div>
    </div>
    <div className="mt-5 flex shrink-0 pl-2">
      <Ruler />
      <div className="flex w-[100px] pl-3.5">
        <IconButton label="Toggle Snapping"><Icon w={16} h={16}><path d="M6 15H1v-3l1-1q-2-3-1-6 2-5 7-5t7 5q1 3-1 6l1 1v3h-5v-3q2-3 1-5-1-2-3-2T5 7q-1 2 1 5z" fill="#38b0dc" /></Icon></IconButton>
      </div>
    </div>
    <div className="flex min-h-0 flex-1 pr-[7px] pl-2">
      <WaveformView />
      <DecibelScale />
    </div>
    <div className="mr-[7px] ml-2 flex h-3 shrink-0 items-center border-b border-[#111] bg-[#1a1a1a]">
      <div className="flex-1" />
      <div className="h-1.5 w-[30px] border-y-2 border-dotted border-[#777]" />
      <div className="flex flex-1 justify-end pr-5"><Icon w={10} h={6}><path d="M5 0l5 6H0z" fill="#888" /></Icon></div>
    </div>
    <div className="flex h-[46px] shrink-0 items-center pr-[13px] pl-[13px]">
      <span className="w-[462px] pt-1 text-xl text-[#3f93c6]">0:00.000</span>
      {TRANSPORT.map((t) => (
        <IconButton key={t.label} label={t.label} className="w-[37px]"><Icon w={22}>{t.icon}</Icon></IconButton>
      ))}
      <IconButton label="Loop Playback" className="w-[37px]"><LoopIcon /></IconButton>
      <IconButton label="Skip Selection" className="w-[37px]"><Icon w={22}><path d="M0 10h3V7l3 4-3 4v-3H0zM15 10V6l7 5-7 5v-4h-4v-2z" fill="#b0b0b0" /><path d="M7 4v3M7 15v3M11 4v3M11 15v3M7 8v6M11 8v6" stroke="#b0b0b0" strokeWidth="1.500" /></Icon></IconButton>
      <div className="ml-auto flex">
        {ZOOMS.map((z) => (
          <IconButton key={z.label} label={z.label} className="w-[37px]"><Icon w={26}>{z.icon}</Icon></IconButton>
        ))}
      </div>
    </div>
  </section>
);

const levelX = (i: number) => `${(i / 20) * 98.8}%`;

const LevelsPanel = () => (
  <section className="flex min-w-0 flex-1 flex-col bg-[#262626]">
    <TabBar plain><Tab label="Levels" active /></TabBar>
    <div className="mx-2 mt-[5px] flex h-[54px] border border-[#151515] bg-black">
      <div className="w-0.5 bg-[#b3b300]" />
      <div className="mr-2.5 ml-auto w-0.5 bg-[#1c1c1c]" />
    </div>
    <svg width="100%" height="24" className="overflow-visible px-[9px] text-xs" fill="#9a9a9a">
      {Array.from({ length: 61 }, (_, i) => i).map((i) => (
        <rect key={i} x={levelX(i / 3)} width="2" height={i % 3 ? 4 : 6} fill="#a8a8a8" />
      ))}
      <text x="-2" y="17">dB</text>
      {Array.from({ length: 20 }, (_, i) => i + 1).map((i) => (
        <text key={i} x={levelX(i)} y="17" textAnchor="middle">{i * 3 - 60}</text>
      ))}
    </svg>
  </section>
);

const SelectionPanel = () => (
  <section className="w-[387px] shrink-0 bg-[#262626]">
    <TabBar plain><Tab label="Selection/View" active /></TabBar>
    <table className="ml-3.5 text-left text-[13px] text-[#9a9a9a]">
      <thead>
        <tr className="h-5">
          <td className="w-[62px]" />
          <th className="w-[86px] font-normal">Start</th>
          <th className="w-[86px] font-normal">End</th>
          <th className="font-normal">Duration</th>
        </tr>
      </thead>
      <tbody>
        {["Selection", "View"].map((row) => (
          <tr key={row} className="h-[25px]">
            <th className="font-normal">{row}</th>
            <td className="pl-0.5 text-[#4599cb]">0:00.000</td>
            <td className="pl-0.5 text-[#4599cb]">0:40.020</td>
            <td className="pl-0.5 text-[#4599cb]">0:40.020</td>
          </tr>
        ))}
      </tbody>
    </table>
  </section>
);

const StatusBar = () => (
  <footer className="mt-[3px] mb-0.5 flex h-[23px] shrink-0 items-center bg-[#262626] pl-2.5 text-[13px] whitespace-nowrap text-[#9a9a9a]">
    <span className="mr-auto">Apply Amplify completed in 0.04 seconds</span>
    <span className="flex gap-1.5 border-r border-[#1a1a1a] pr-2">
      <span>44100 Hz</span><span>●</span><span>16-bit</span><span>●</span><span>Mono</span>
    </span>
    <span className="w-[68px] border-r border-[#1a1a1a] pl-2.5">3.37 MB</span>
    <span className="w-[82px] border-r border-[#1a1a1a] pr-2 text-right">0:40.020</span>
    <span className="mr-[60px] w-[107px] border-r border-[#1a1a1a] pl-2.5">132.84 GB free</span>
  </footer>
);

const App = () => (
  <div className="flex h-screen min-h-[800px] flex-col overflow-hidden bg-black font-['Open_Sans','Noto_Sans',sans-serif]">
    <TitleBar />
    <Toolbar />
    <main className="flex min-h-0 flex-1 flex-col gap-1.5 pt-1 pr-0.5 pl-px">
      <div className="flex min-h-0 flex-1 gap-1.5">
        <div className="flex w-[401px] shrink-0 flex-col gap-1.5">
          <FilesPanel />
          <MediaBrowser />
        </div>
        <EditorPanel />
      </div>
      <div className="flex h-[119px] shrink-0 gap-1.5">
        <HistoryPanel />
        <LevelsPanel />
        <SelectionPanel />
      </div>
    </main>
    <StatusBar />
  </div>
);

export default App;
